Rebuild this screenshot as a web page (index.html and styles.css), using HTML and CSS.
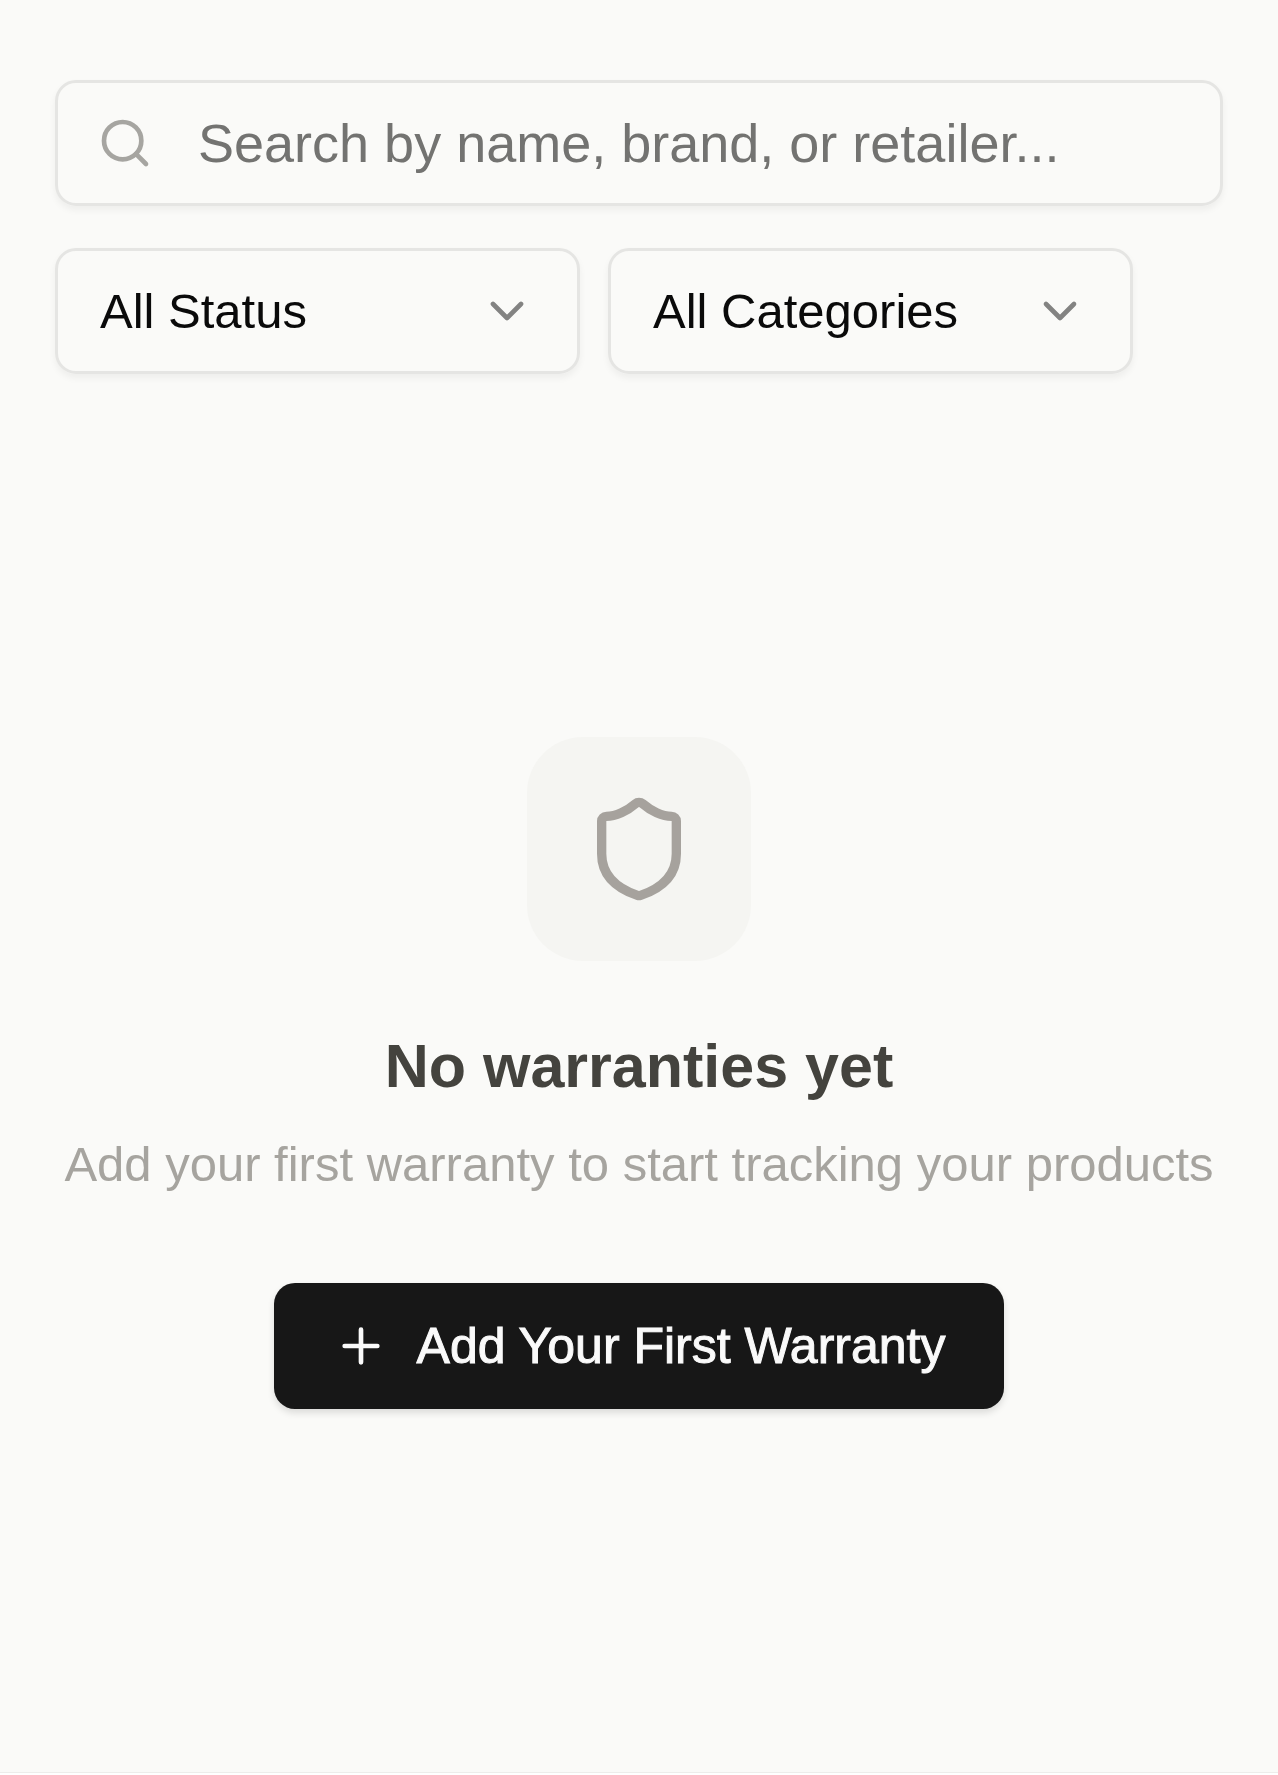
FILE: index.html
```html
<!DOCTYPE html>
<html lang="en">
<head>
    <meta charset="UTF-8">
    <meta name="viewport" content="width=device-width, initial-scale=1.0">
    <title>Warranties</title>
    <link rel="stylesheet" href="styles.css">
</head>
<body>
    <main class="page">
        <form class="filters">
            <div class="search">
                <svg class="icon search-icon" viewBox="0 0 24 24" aria-hidden="true">
                    <circle cx="11" cy="11" r="8"/>
                    <path d="m21 21-4.3-4.3"/>
                </svg>
                <input class="control search-input" type="text" aria-label="Search warranties" placeholder="Search by name, brand, or retailer...">
            </div>
            <div class="filter-row">
                <div class="select-wrap">
                    <select class="control select" aria-label="Status">
                        <option>All Status</option>
                    </select>
                    <svg class="icon chevron" viewBox="0 0 24 24" aria-hidden="true">
                        <path d="m6 9 6 6 6-6"/>
                    </svg>
                </div>
                <div class="select-wrap">
                    <select class="control select" aria-label="Category">
                        <option>All Categories</option>
                    </select>
                    <svg class="icon chevron" viewBox="0 0 24 24" aria-hidden="true">
                        <path d="m6 9 6 6 6-6"/>
                    </svg>
                </div>
            </div>
        </form>

        <section class="empty">
            <div class="empty-badge">
                <svg class="icon shield" viewBox="0 0 24 24" aria-hidden="true">
                    <path d="M20 13c0 5-3.5 7.5-7.66 8.95a1 1 0 0 1-.67-.01C7.5 20.5 4 18 4 13V6a1 1 0 0 1 1-1c2 0 4.5-1.2 6.24-2.72a1.17 1.17 0 0 1 1.52 0C14.51 3.81 17 5 19 5a1 1 0 0 1 1 1z"/>
                </svg>
            </div>
            <h2 class="empty-title">No warranties yet</h2>
            <p class="empty-text">Add your first warranty to start tracking your products</p>
            <button class="add-btn" type="button">
                <svg class="icon" viewBox="0 0 24 24" aria-hidden="true">
                    <path d="M5 12h14M12 5v14"/>
                </svg>
                Add Your First Warranty
            </button>
        </section>
    </main>
</body>
</html>
```
FILE: styles.css
```css
* {
    box-sizing: border-box;
}

html {
    background: #fff;
}

body {
    margin: 0;
    font-family: "Liberation Sans", Arial, sans-serif;
    font-size: 49px;
    color: #0a0a0a;
}

.page {
    display: flex;
    flex-direction: column;
    min-height: calc(100vh - 2px);
    padding: 80px 55px 0;
    background: #fafaf8;
    border-bottom: 1px solid #ededeb;
}

.icon {
    width: 56px;
    height: 56px;
    flex-shrink: 0;
    fill: none;
    stroke: currentColor;
    stroke-width: 2;
    stroke-linecap: round;
    stroke-linejoin: round;
}

/* Search and filters */
.filters {
    display: flex;
    flex-direction: column;
    gap: 42px;
}

.control {
    display: block;
    width: 100%;
    height: 126px;
    margin: 0;
    border: 3px solid #e5e5e3;
    border-radius: 21px;
    background: transparent;
    box-shadow: 0 4px 7px rgba(0, 0, 0, 0.05);
    font-family: inherit;
    color: inherit;
    outline: none;
}

.search,
.select-wrap {
    position: relative;
}

.search-icon {
    position: absolute;
    left: 42px;
    top: 35px;
    color: #a6a5a1;
}

.search-input {
    padding: 0 42px 0 140px;
    font-size: 54px;
}

.search-input::placeholder {
    color: #737371;
    opacity: 1;
}

.filter-row {
    display: flex;
    gap: 28px;
}

.select-wrap {
    width: 525px;
}

.select {
    appearance: none;
    padding: 0 112px 0 42px;
    font-size: 49px;
}

.chevron {
    position: absolute;
    right: 45px;
    top: 35px;
    color: #838382;
    pointer-events: none;
}

/* Empty state */
.empty {
    flex: 1;
    display: flex;
    flex-direction: column;
    align-items: center;
    justify-content: center;
    text-align: center;
}

.empty-badge {
    display: flex;
    align-items: center;
    justify-content: center;
    width: 224px;
    height: 224px;
    margin-bottom: 56px;
    border-radius: 56px;
    background: #f5f5f2;
    color: #a6a29d;
}

.shield {
    width: 112px;
    height: 112px;
}

.empty-title {
    margin: 0 0 14px;
    font-size: 61px;
    line-height: 98px;
    font-weight: 600;
    color: #44433e;
}

.empty-text {
    margin: 0 0 84px;
    line-height: 70px;
    color: #a6a49f;
}

.add-btn {
    display: flex;
    align-items: center;
    gap: 28px;
    height: 126px;
    padding: 0 59px;
    border: none;
    border-radius: 21px;
    background: #171717;
    box-shadow: 0 4px 7px rgba(0, 0, 0, 0.12);
    color: #fafafa;
    font-family: inherit;
    font-size: 50px;
    -webkit-text-stroke: 1px currentColor;
    cursor: pointer;
}
```
